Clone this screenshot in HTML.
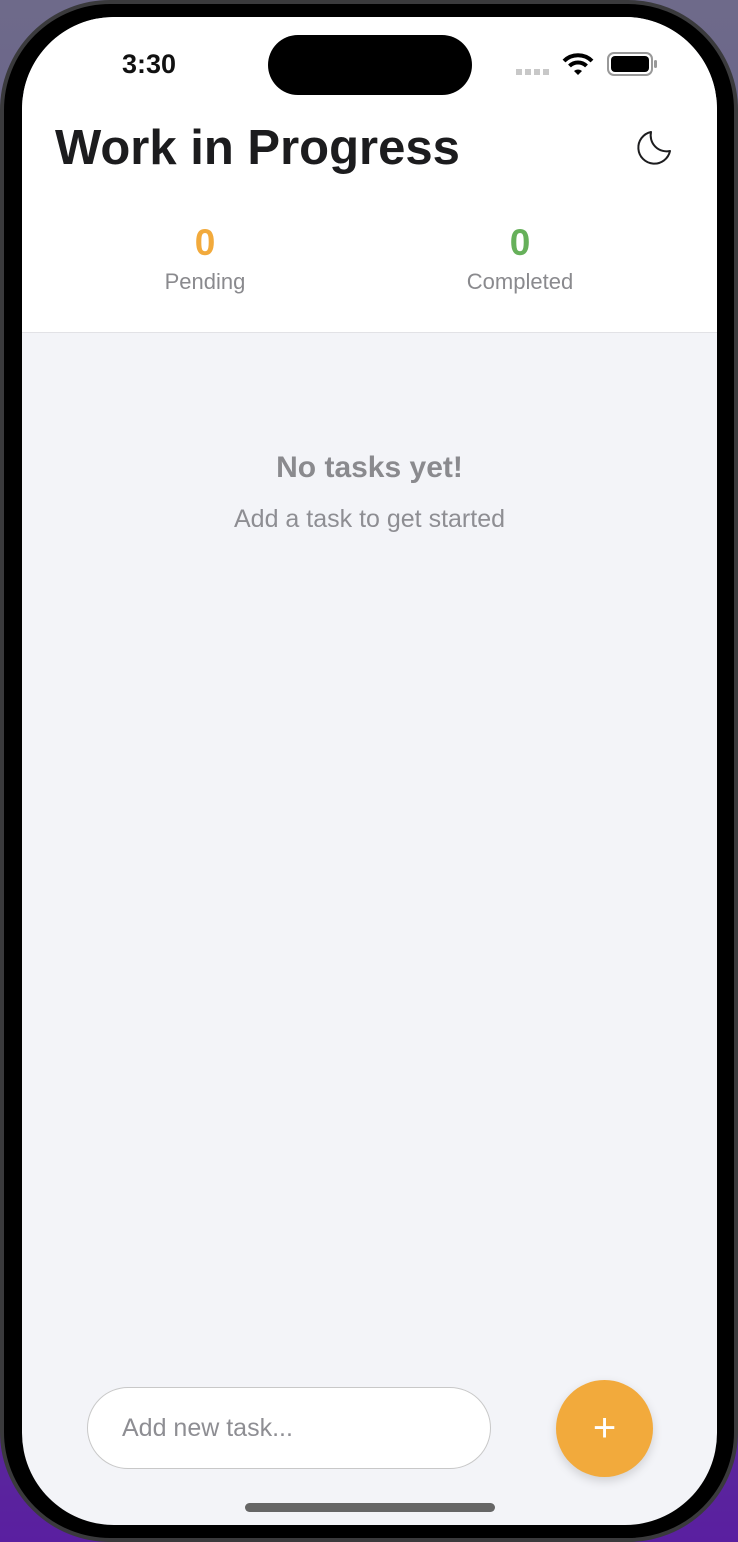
<!DOCTYPE html>
<html><head><meta charset="utf-8"><style>
*{margin:0;padding:0;box-sizing:border-box}
body{width:738px;height:1542px;overflow:hidden;background:linear-gradient(180deg,#6e6a8a 0%,#5a4f86 60%,#5a1fa0 100%);font-family:"Liberation Sans",sans-serif;position:relative}
.frame{position:absolute;left:0;top:0;width:738px;height:1542px;border-radius:110px;background:#000;border:4px solid #3a3a3c}
.screen{position:absolute;left:22px;top:17px;width:695px;height:1508px;border-radius:92px;background:#f3f4f8;overflow:hidden}
.top{position:absolute;left:0;top:0;width:695px;height:316px;background:#fff;border-bottom:1px solid #e2e2e6}
.island{position:absolute;left:246px;top:18px;width:204px;height:60px;border-radius:30px;background:#000}
.time{position:absolute;left:100px;top:32px;font-size:27px;font-weight:bold;color:#111}
.title{position:absolute;left:33px;top:103px;font-size:49px;font-weight:bold;color:#1c1c1e;letter-spacing:0}
.stat{position:absolute;text-align:center;width:200px}
.stat b{display:block;font-size:37px}
.stat span{display:block;font-size:22px;color:#8a8a8e;margin-top:5px}
.empty{position:absolute;left:0;width:695px;text-align:center}
.input{position:absolute;left:65px;top:1370px;width:404px;height:82px;border-radius:41px;background:#fff;border:1.5px solid #c8c8c8;font-size:25px;color:#8e8e93;padding:26px 0 0 34px}
.fab{position:absolute;left:534px;top:1363px;width:97px;height:97px;border-radius:50%;background:#f2aa3c;box-shadow:0 4px 10px rgba(0,0,0,.15);color:#fff;font-size:40px;text-align:center;line-height:97px}
.home{position:absolute;left:223px;top:1486px;width:250px;height:9px;border-radius:5px;background:#666}
</style></head><body>
<div class="frame"></div>
<div class="screen">
<div class="top">
<div class="island"></div>
<div class="time">3:30</div>
<div style="position:absolute;left:494px;top:52px;width:36px;height:6px;background:repeating-linear-gradient(90deg,#c8c8c8 0 6px,transparent 6px 9px)"></div>
<svg style="position:absolute;left:540px;top:35px" width="32" height="24" viewBox="0 0 32 24"><path d="M2 9 A20 20 0 0 1 30 9" stroke="#000" stroke-width="4" fill="none"/><path d="M7.5 14 A12 12 0 0 1 24.5 14" stroke="#000" stroke-width="4" fill="none"/><path d="M12 19 L16 23 L20 19 A6 6 0 0 0 12 19Z" fill="#000"/></svg>
<div style="position:absolute;left:585px;top:35px;width:46px;height:24px;border:2px solid #999;border-radius:7px;padding:2px"><div style="width:100%;height:100%;background:#000;border-radius:4px"></div></div>
<div style="position:absolute;left:632px;top:43px;width:3px;height:8px;background:#999;border-radius:2px"></div>
<div class="title">Work in Progress</div>
<svg style="position:absolute;left:612px;top:111px" width="40" height="40" viewBox="0 0 40 40"><path d="M17 4 A16 16 0 1 0 36 23 A16 16 0 0 1 17 4 Z" fill="none" stroke="#1c1c1e" stroke-width="2" stroke-linejoin="round"/></svg>
<div class="stat" style="left:83px;top:205px"><b style="color:#f2aa3c">0</b><span>Pending</span></div>
<div class="stat" style="left:398px;top:205px"><b style="color:#66b05a">0</b><span>Completed</span></div>
</div>
<div class="empty" style="top:434px;font-size:30px;font-weight:bold;color:#8a8a8e">No tasks yet!</div>
<div class="empty" style="top:488px;font-size:25px;color:#8e8e93">Add a task to get started</div>
<div class="input">Add new task...</div>
<div class="fab">+</div>
<div class="home"></div>
</div>
</body></html>
